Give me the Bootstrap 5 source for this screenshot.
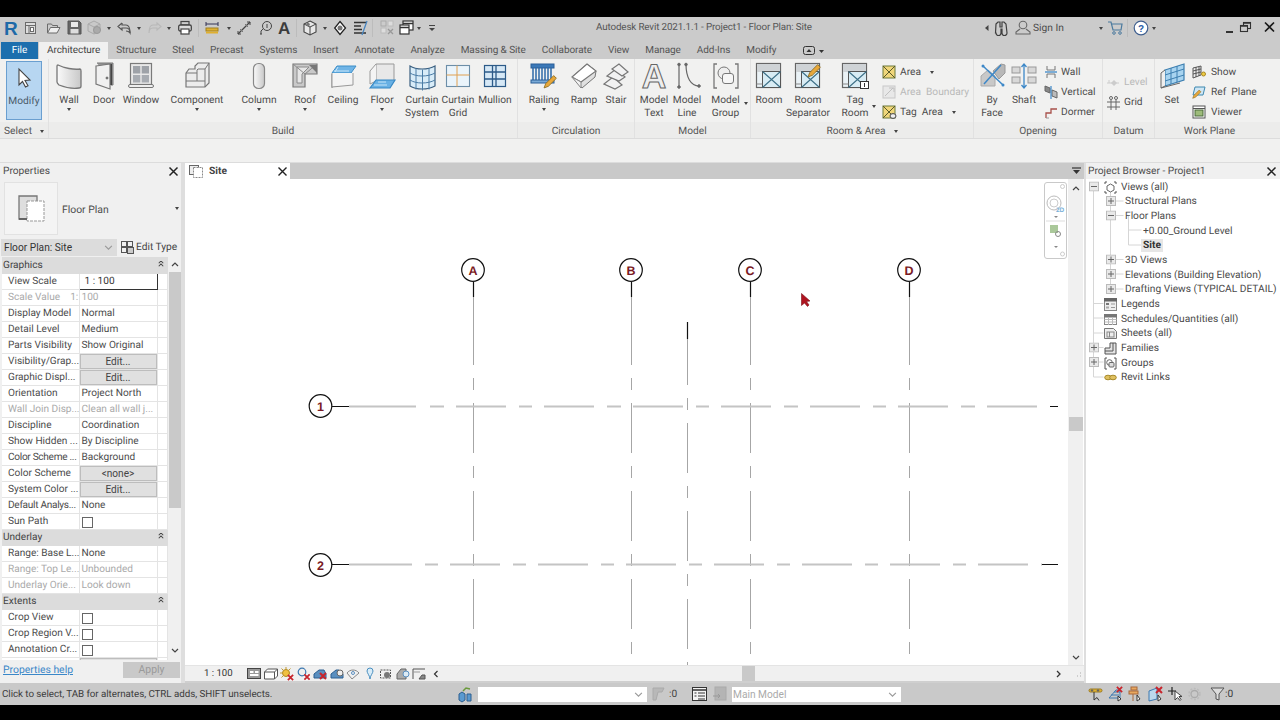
<!DOCTYPE html>
<html lang="en">
<head>
<meta charset="utf-8">
<title>Autodesk Revit 2021.1.1 - Project1 - Floor Plan: Site</title>
<link href="https://cdn.jsdelivr.net/npm/bootstrap@5.3.0/dist/css/bootstrap.min.css" rel="stylesheet">
<style>
html,body{height:720px;overflow:hidden;margin:0}
body{width:1280px;font-family:Roboto,"Noto Sans",sans-serif;font-size:10.2px;line-height:13px;color:#4c4c4c;background:#000;text-rendering:geometricPrecision}
svg{fill:none;stroke:#6b6b6b;stroke-width:1;flex:none;display:block;overflow:visible}
svg text{stroke:none}
svg text.outl{stroke:#666;stroke-width:1}
.letter{height:17px;background:#000;flex:none}
.letter.b{height:15px}
.titlebar{height:25px;background:#cbcbcb;flex:none;padding:0 0 3px 3px}
.qc{width:8px;height:16px;flex:none;position:relative}
.qc::after,.car::after,.pcar{content:"";display:block;width:0;height:0;border:2.5px solid transparent;border-top:3px solid #444;border-bottom:0}
.qc::after{margin:7px auto 0}
.qsep{width:1px;height:18px;background:#bcbcbc;margin:0 2px 0 1px;flex:none}
.wintitle{margin-left:159px;font-size:9.8px;letter-spacing:-.13px;margin-bottom:2px;white-space:nowrap;color:#555}
.signgroup{margin-left:auto;width:295px}
.signin{width:64px;padding-top:1px}
.ribtabs{height:17px;background:#cbcbcb;flex:none;padding-left:1px}
.ribtabs .nav-link{padding:0 8px;height:17px;line-height:18px;font-size:10px;letter-spacing:-.08px;color:#555;border-radius:0}
.ribtabs .nav-link.file{background:#1d6fae;color:#fff;width:37px;text-align:center;padding:0;margin-right:1px}
.ribtabs .nav-link.active{background:#f0f0f0;color:#444}
.ribbon{height:79px;background:#f1f1f0;flex:none}
.rpanel{border-right:1px solid #e1e1e1;display:flex;flex-direction:column;flex:none}
.rtools{height:63px;display:flex;flex:none}
.rtitle{height:16px;line-height:19px;background:#ececeb;text-align:center;flex:none;color:#555;font-size:10.2px}
.rtitle.d-flex{padding-top:2px}
.tool{display:flex;flex-direction:column;align-items:center;padding-top:3px;flex:none;text-align:center;line-height:13px;position:relative}
.tool .lbl{margin-top:4px;white-space:nowrap}
.car{height:4px;margin-top:1px;display:block}
.car::after{margin:0 auto}
.t-caret{width:5px;right:2px;top:43px;margin:0}
.t-caret2{width:5px;right:5px;top:46px;margin:0}
.w28{width:28px}.w30{width:30px}.w34{width:34px}.w36{width:36px}.w38{width:38px}.w40{width:40px}.w42{width:42px}.w44{width:44px}.w49{width:49px}.w52{width:52px}.w56{width:56px}.w68{width:68px}
.modify{margin:2px 6px 0;width:36px;height:59px;background:#b7d6f1;border:1px solid #6a9fd0;padding-top:2px;color:#4a5a68}
.modify .lbl{margin-top:3px}
.pselect{width:49px}
.pselect .rtools{width:48px}
.scol{display:flex;flex-direction:column;padding-top:3px;flex:none}
.srow{height:20.5px;display:flex;align-items:center;gap:4px;white-space:nowrap}
.srow .pcar{margin-left:5px}
.dis{color:#b9b9b9}
.room-col{width:92px;padding-left:1px}
.open-col{width:64px;padding-left:6px}
.open-col .srow{gap:3px}
.datum-col{width:51px;padding-left:3px;padding-top:13px}
.wp-col{padding-left:3px}
.wp-col .srow{gap:5px}
.spacer{height:25px;background:#f1f1f0;border-top:1px solid #dcdcdc;border-bottom:1px solid #dcdcdc;flex:none}
.workarea{height:520px;flex:none;background:#dedede}
.props{width:181px;background:#f0f0f0;margin-right:4px;flex:none;display:flex;flex-direction:column}
.ptitle{height:16px;line-height:18px;padding-left:3px;position:relative;flex:none}
.xbtn{position:absolute;right:2px;top:3px}
.typesel{height:57px;flex:none;padding:3px 0 0 4px;align-items:flex-start}
.thumb{width:54px;height:53px;background:#f4f4f4;border:1px solid #e2e2e2;display:flex;align-items:center;justify-content:center;flex:none}
.typesel .name{margin:21px 0 0 4px;font-size:10.4px;white-space:nowrap}
.typesel .pcar{margin:25px 2px 0 auto}
.instance{height:21px;flex:none;padding:3px 0 1px 1px;align-items:center}
.form-select{--chev:url("data:image/svg+xml,%3csvg xmlns='http://www.w3.org/2000/svg' viewBox='0 0 16 16'%3e%3cpath fill='none' stroke='%23999' stroke-width='2' d='M2 5l6 6 6-6'/%3e%3c/svg%3e");background-image:var(--chev)}
.instance .form-select{width:116px;height:17px;padding:0 14px 0 3px;font-size:10.2px;line-height:17px;background-color:#dcdcdc;background-size:9px 9px;background-position:right 4px center;border:0;border-radius:0;color:#333;font-family:inherit;flex:none}
.edittype{margin-left:4px;display:flex;align-items:center;gap:2px;color:#444;white-space:nowrap;font-size:10.2px}
.gridwrap{height:403px;flex:none;overflow:hidden}
.pgrid{width:165px;margin:0 0 0 2px;table-layout:fixed;border-collapse:collapse;background:#fff;--bs-table-bg:#fff;--bs-table-border-color:#e2e2e2;color:#4c4c4c}
.pgrid .c1{width:77px}.pgrid .c2{width:78px}.pgrid .c3{width:10px}
.pgrid td{height:16px;padding:1px 0 0 6px;font-size:10.1px;line-height:14px;white-space:nowrap;overflow:hidden;border:1px solid #e4e4e4;border-width:1px 1px 1px 0;background:#fff;color:#4c4c4c;box-shadow:none;vertical-align:middle}
.pgrid td.v{padding-left:2px}
.pgrid td.tight{letter-spacing:-.3px}
.pgrid .ro td{color:#aaa}
.pgrid td.sec{background:#dcdcdc;padding:1px 0 0 1px;position:relative;border-color:#dcdcdc;color:#444}
.sec svg{position:absolute;right:3px;top:3px}
.pgrid td.act{border:1px solid #333;padding-left:5px;color:#333}
.pgrid .btn{display:block;width:100%;height:15px;padding:0;border-radius:0;font-size:10.1px;line-height:14px;background:#e0e0e0;border:1px solid #bdbdbd;color:#444;font-family:inherit}
.pgrid .form-check-input{width:11px;height:11px;margin:0;border:1px solid #666;border-radius:0;display:block;float:none}
.pscroll{width:13px;margin-left:1px;flex:none;display:flex;flex-direction:column;align-items:center}
.pscroll .thumbv{width:12px;height:236px;background:#c9c9c9;flex:none}
.pfoot{height:23px;flex:none;padding:2px 1px 0 3px;align-items:flex-start;justify-content:space-between}
.pfoot a{color:#3a87c8;text-decoration:underline;margin-top:1px;font-size:10.4px}
.pfoot .btn{width:57px;height:16px;padding:0;border:0;border-radius:0;background:#c9c9c9;color:#9a9a9a;font-size:10.4px;line-height:16px;opacity:1;font-family:inherit}
.center{width:899px;margin-right:2px;display:flex;flex-direction:column;flex:none}
.doctabs{height:16px;background:#c9c9c9;flex:none;position:relative}
.doctab{width:105px;background:#fff;height:16px;display:flex;align-items:center;padding-left:4px;gap:6px;font-weight:700;color:#444;position:relative;font-size:10.2px;line-height:15px}
.doctab>span{padding-top:1px}
.ddbtn{position:absolute;right:3px;top:4px}
.viewrow{height:486px;flex:none;background:#fff;position:relative}
.vscroll{width:16px;background:#f0f0f0;border-right:1px solid #fff;flex:none;display:flex;flex-direction:column;align-items:center;padding:5px 0 3px 0;justify-content:space-between}
.vscroll i{display:block;width:14px;height:14px;background:#c9c9c9;margin-top:2px}
.navbar-wheel{position:absolute;top:3px;right:17px;width:23px;height:77px;background:#fff;border:1px solid #c9c9c9;border-radius:3px}
.viewbar{height:16px;background:#f0f0f0;border-top:1px solid #e4e4e4;flex:none;align-items:center;position:relative}
.viewbar .sc{margin-left:19px;width:42px;font-size:9.6px;color:#333;white-space:nowrap}
.vslot{width:16.5px;display:flex;justify-content:center;flex:none}
.hthumb{position:absolute;left:557px;top:0;width:13px;height:15px;background:#c9c9c9}
.edge{height:2px;background:#cfcfcf;flex:none}
.browser{flex:1;background:#fff;display:flex;flex-direction:column}
.browser .ptitle{background:#f0f0f0;padding-left:2px}
.browser .xbtn{right:3px}
.tree{position:relative;flex:1;padding:1px 0 0;margin:0;list-style:none;font-size:10.2px;color:#4a4a4a}
.tree>svg{position:absolute;left:0;top:0}
.tree li{height:14.67px;display:flex;align-items:center;gap:4px;position:relative;white-space:nowrap}
.l0{padding-left:18px}
.l1{padding-left:39px}
.l2{padding-left:57px}
.tree .cur{background:#e6e6e6;font-weight:700;padding:0 2px;margin-left:-2px;color:#333}
.statusbar{height:22px;background:#c9c9c9;flex:none;align-items:center;padding-left:2px;position:relative;color:#3c3c3c}
.statusbar .hint{width:456px;white-space:nowrap;font-size:9.8px;letter-spacing:-.05px}
.statusbar .form-select{height:15px;padding:0 12px 0 1px;font-size:10.2px;line-height:15px;background-color:#fff;background-size:9px 9px;background-position:right 4px center;border:0;border-radius:0;color:#aaa;flex:none;font-family:inherit}
.sel1{width:169px;margin-left:5px}
.sel2{width:169px;margin-left:5px}
.s0{margin-left:5px}
.zero{margin-left:4px;width:23px;color:#444}
.m6{margin-left:5px}
.stail{margin-left:187px;gap:5px}
.stail b{font-weight:400;margin-left:-5px}
</style>
</head>
<body class="d-flex flex-column">
<div class="letter"></div>

<header class="titlebar d-flex align-items-center">
  <svg width="18" height="16" viewBox="-1 0 18 16"><text x="0" y="15" font-family="Liberation Sans" font-size="19" font-weight="700" fill="#1e6aa8">R</text></svg>
  <svg width="21" height="16" viewBox="-4 0 21 16"><rect x=".5" y="2.5" width="10" height="11" fill="#ddd"/><path d="M.5 5.5h10M4 5.5v8"/><rect x="5.5" y="7.5" width="3" height="4" fill="#fff"/></svg>
  <svg width="23" height="16" viewBox="-5 0 23 16"><path d="M.5 13V4h4l1 1.500h5v2" /><path d="M.5 13l3-5.500h9.500l-3 5.500z" fill="#eee"/></svg>
  <svg width="20" height="16" viewBox="-2 0 20 16"><path d="M1 1h11l2 2v11H1z" fill="#666" stroke="#555"/><rect x="4" y="2" width="7" height="5" fill="#e8e8e8" stroke="none"/><rect x="3.500" y="9" width="8" height="4.500" fill="#ddd" stroke="none"/></svg>
  <svg width="20" height="16" viewBox="-2 0 20 16"><path d="M7 1l6 3v7l-6 3-6-3V4z" fill="#c9c9c9" stroke="#aaa"/><path d="M1 4l6 3 6-3M7 7v7" stroke="#aaa"/><circle cx="10" cy="10" r="3.500" fill="#aaa" stroke="#999"/></svg>
  <span class="qc"></span>
  <svg width="22" height="16" viewBox="-4 0 22 16"><path d="M5 3L1 6.500 5 10V8h4c3 0 4 2 4 5-1-1.500-2.500-2-4-2" stroke="#555" stroke-width="1.200"/><path d="M5 3v2h4c3 0 4 3 4 8" stroke="#555" stroke-width="1.200"/></svg>
  <span class="qc"></span>
  <svg width="22" height="16" viewBox="-5 0 22 16"><path d="M9 3l4 3.500L9 10V8H5c-3 0-4 2-4 5 0-5 1-8 4-8h4z" stroke="#b8b8b8" stroke-width="1.100"/></svg>
  <span class="qc"></span>
  <svg width="24" height="16" viewBox="-5 0 24 16"><rect x="3" y="1.500" width="8" height="3.500" stroke="#444" stroke-width="1.200"/><rect x=".7" y="5" width="12.600" height="6" rx="1.500" stroke="#444" stroke-width="1.300" fill="#ddd"/><rect x="3" y="9" width="8" height="5" fill="#fff" stroke="#444" stroke-width="1.200"/></svg>
  <span class="qsep"></span>
  <svg width="24" height="16" viewBox="-4 0 24 16"><rect x="1" y="8" width="12" height="3" fill="#e0b030" stroke="#a08020"/><rect x="1" y="11.500" width="12" height="2" fill="#e0b030" stroke="none"/><path d="M1 4h12M1 2v4M13 2v4" stroke="#335"/></svg>
  <span class="qc"></span>
  <svg width="22" height="16" viewBox="-4 0 22 16"><path d="M1 14L13 2" stroke="#444" stroke-width="1.300"/><path d="M1 11v3h3M10 2h3v3" stroke="#444"/><path d="M3 9l3 3M8 4l3 3" stroke="#777"/></svg>
  <svg width="20" height="16" viewBox="-4 0 20 16"><circle cx="8" cy="6" r="4.500" stroke="#444"/><path d="M8 4v4" stroke="#444"/><path d="M4 9l-2 2v3M1 14h2" stroke="#444"/></svg>
  <svg width="20" height="16" viewBox="-3 0 20 16"><text x="0" y="14" font-family="Liberation Sans" font-size="17" font-weight="700" fill="#3c3c3c">A</text></svg>
  <span class="qsep"></span>
  <svg width="22" height="16" viewBox="-4 0 22 16"><path d="M7 1l6 3v8l-6 3-6-3V4z" fill="#e8e8e8" stroke="#444" stroke-width="1.100"/><path d="M1 4l6 3 6-3M7 7v8" stroke="#444"/><circle cx="5" cy="4.500" r="1.800" fill="#777" stroke="none"/></svg>
  <span class="qc"></span>
  <svg width="20" height="16" viewBox="-5 0 20 16"><path d="M6 1.500l5.500 6.500L6 14.500.7 8z" fill="#fff" stroke="#222" stroke-width="1.300"/><circle cx="6" cy="8" r="2.500" fill="#777" stroke="none"/></svg>
  <svg width="22" height="16" viewBox="-4 0 22 16"><path d="M1 2.500h12M1 6h7M1 9.500h8M1 13h12" stroke="#333" stroke-width="1.500"/><path d="M9 15l5-14" stroke="#4a86c0" stroke-width="1.300"/></svg>
  <span class="qsep"></span>
  <svg width="22" height="16" viewBox="-5 0 22 16"><rect x="1" y="1" width="5" height="5" fill="#ccc" stroke="#aaa"/><rect x="8" y="1" width="5" height="5" fill="#ddd" stroke="#bbb"/><rect x="1" y="8" width="5" height="5" fill="#ddd" stroke="#bbb"/><path d="M8 9l5 5M13 9l-5 5" stroke="#999" stroke-width="1.300"/></svg>
  <svg width="18" height="16" viewBox="-2 0 18 16"><rect x="4" y="1" width="10" height="9" fill="#fff" stroke="#333" stroke-width="1.200"/><path d="M4 3.500h10" stroke="#333" stroke-width="1.500"/><rect x="1" y="5" width="9" height="9" fill="#fff" stroke="#333" stroke-width="1.200"/><path d="M1 7.500h9" stroke="#333" stroke-width="1.500"/></svg>
  <span class="qc"></span>
  <svg width="14" height="16" viewBox="-6 0 14 16"><path d="M0 5.500h6" stroke="#444"/><path d="M0 8l3 3 3-3z" fill="#444" stroke="none"/></svg>
  <span class="wintitle">Autodesk Revit 2021.1.1 - Project1 - Floor Plan: Site</span>
  <div class="signgroup d-flex align-items-center">
    <svg width="9" height="16" viewBox="0 0 9 16"><path d="M0 8l3.500-3v6z" fill="#444" stroke="none"/></svg>
    <svg width="21" height="16" viewBox="0 0 21 16"><path d="M2 4l2-2h2v5h2V2h2l2 2 1 9a2 2 0 01-5 0V9H7v4a2 2 0 01-5 0l-.5 0z" stroke="#3f3f3f" stroke-width="1.200"/></svg>
    <svg width="18" height="16" viewBox="0 0 18 16"><circle cx="8" cy="5" r="3.800" stroke="#666" stroke-width="1.100"/><path d="M5 9l-4 3v2h14v-2l-4-3" stroke="#666" stroke-width="1.100"/></svg>
    <span class="signin">Sign In</span>
    <span class="qc"></span>
    <svg width="21" height="16" viewBox="-3 0 21 16"><path d="M0 2h3l2 8h8l1-6H4" stroke="#4b7a9e" stroke-width="1.200"/><circle cx="6" cy="13" r="1.300" stroke="#4b7a9e"/><circle cx="12" cy="13" r="1.300" stroke="#4b7a9e"/></svg>
    <span class="qsep"></span>
    <svg width="20" height="16" viewBox="-3 0 20 16"><circle cx="8" cy="8" r="6.800" stroke="#3f5f8f" stroke-width="1.200" fill="#fff"/><text x="8" y="11.500" text-anchor="middle" font-family="Liberation Sans" font-size="10" font-weight="700" fill="#2d5ea8">?</text></svg>
    <span class="qc"></span>
    <svg class="ms-auto" width="12" height="16" viewBox="0 0 12 16"><path d="M3 12h7" stroke="#222" stroke-width="1.800"/></svg>
    <svg width="21" height="16" viewBox="-5 0 21 16"><rect x="3.500" y="2.500" width="7" height="6" stroke="#333" stroke-width="1.100"/><rect x=".5" y="5.500" width="7" height="6" fill="#cbcbcb" stroke="#333" stroke-width="1.100"/><path d="M.5 6h7M3.500 3h7" stroke="#333" stroke-width="1.500"/></svg>
    <svg class="ms-2 me-1" width="12" height="16" viewBox="0 0 12 16"><path d="M1 2.500l9 9M10 2.500l-9 9" stroke="#1a1a1a" stroke-width="1.700"/></svg>
  </div>
</header>

<ul class="nav ribtabs">
  <li class="nav-item"><a class="nav-link file" href="#">File</a></li>
  <li class="nav-item"><a class="nav-link active" href="#">Architecture</a></li>
  <li class="nav-item"><a class="nav-link" href="#">Structure</a></li>
  <li class="nav-item"><a class="nav-link" href="#">Steel</a></li>
  <li class="nav-item"><a class="nav-link" href="#">Precast</a></li>
  <li class="nav-item"><a class="nav-link" href="#">Systems</a></li>
  <li class="nav-item"><a class="nav-link" href="#">Insert</a></li>
  <li class="nav-item"><a class="nav-link" href="#">Annotate</a></li>
  <li class="nav-item"><a class="nav-link" href="#">Analyze</a></li>
  <li class="nav-item"><a class="nav-link" href="#">Massing &amp; Site</a></li>
  <li class="nav-item"><a class="nav-link" href="#">Collaborate</a></li>
  <li class="nav-item"><a class="nav-link" href="#">View</a></li>
  <li class="nav-item"><a class="nav-link" href="#">Manage</a></li>
  <li class="nav-item"><a class="nav-link" href="#">Add-Ins</a></li>
  <li class="nav-item"><a class="nav-link" href="#">Modify</a></li>
  <li class="nav-item ms-3 d-flex align-items-center"><svg width="24" height="14" viewBox="0 0 24 14"><rect x="3.500" y="2.500" width="11" height="8" rx="2" stroke="#333"/><path d="M6.500 8h5L9 5z" fill="#333" stroke="none"/><path d="M19 6h5l-2.500 3z" fill="#333" stroke="none"/></svg></li>
</ul>

<svg width="0" height="0" class="position-absolute">
  <defs>
    <linearGradient id="g1" x1="0" x2="1"><stop offset="0" stop-color="#fafafa"/><stop offset="1" stop-color="#c8c8c8"/></linearGradient>
    <symbol id="roombox" viewBox="0 0 28 28"><rect x="1.500" y="1.500" width="24" height="24" fill="#eaf2f6" stroke="#666" stroke-width="1.200"/><rect x="2" y="2" width="23" height="8" fill="#cfd3d6" stroke="none"/><rect x="7.500" y="9.500" width="18" height="16" fill="#d8ecf4" stroke="#555"/><path d="M7.500 9.500l18 16M25.500 9.500l-18 16" stroke="#3c6f86" stroke-width="1.100"/><path d="M1.500 22h6" stroke="#888"/></symbol>
    <symbol id="pencil" viewBox="0 0 14 14"><path d="M1 13l1.500-4L10 1.500 12.500 4 5 11.500z" fill="#e8a83a" stroke="#8a6a20" stroke-width=".8"/></symbol>
    <symbol id="redx" viewBox="0 0 8 8"><path d="M1 1l6 6M7 1L1 7" stroke="#c8242c" stroke-width="2"/></symbol>
    <symbol id="yelx" viewBox="0 0 14 14"><rect x="1" y="1" width="12" height="12" fill="#f0d67a" stroke="#6c7a3a"/><path d="M1 1l12 12M13 1L1 13" stroke="#5a5a2a"/></symbol>
    <symbol id="plusbox" viewBox="0 0 10 10"><rect x=".5" y=".5" width="9" height="9" fill="#e9e9e9" stroke="#bbb"/><path d="M2 5h6M5 2v6" stroke="#666"/></symbol>
    <symbol id="minusbox" viewBox="0 0 10 10"><rect x=".5" y=".5" width="9" height="9" fill="#e9e9e9" stroke="#bbb"/><path d="M2 5h6" stroke="#666"/></symbol>
    <symbol id="chevup" viewBox="0 0 8 8"><path d="M1 3l3-3 3 3M1 7l3-3 3 3" stroke="#444" stroke-width="1.400"/></symbol>
  </defs>
</svg>

<section class="ribbon d-flex">
  <div class="rpanel pselect" >
    <div class="rtools">
      <div class="tool modify">
        <svg width="28" height="28" viewBox="0 0 28 28"><path d="M9 5l0 16 3.500-3.500 3 5.500 2.500-1.300-3-5.300 5-.4z" fill="#fff" stroke="#444" stroke-width="1.100"/></svg>
        <span class="lbl">Modify</span>
      </div>
    </div>
    <div class="rtitle text-start ps-1 d-flex align-items-center">Select<span class="pcar ms-2"></span></div>
  </div>

  <div class="rpanel">
    <div class="rtools">
      <div class="tool w40"><svg width="28" height="28" viewBox="0 0 28 28"><path d="M3 3c6 3 16 5 22 4 1 0 1 1 1 2v15c0 1-1 2-2 2-7 1-15-1-20-3-1-1-2-2-2-3V4c0-1 0-1 1-1z" fill="url(#g1)" stroke="#777" stroke-width="1.300"/></svg><span class="lbl">Wall</span><span class="car"></span></div>
      <div class="tool w30"><svg width="28" height="28" viewBox="0 0 28 28"><path d="M7 1h16v22h-2" fill="#9a9a9a" stroke="#777"/><path d="M21 2v21" stroke="#444" stroke-width="2"/><path d="M6 4l14-2v25L6 22z" fill="#f0f0f0" stroke="#777" stroke-width="1.200"/><circle cx="17" cy="16" r="1" fill="#777"/></svg><span class="lbl">Door</span></div>
      <div class="tool w44"><svg width="28" height="28" viewBox="0 0 28 28"><rect x="3.500" y="1.500" width="21" height="21" fill="#e8e8e8" stroke="#7a7a7a" stroke-width="1.200"/><rect x="6" y="4" width="7.300" height="7.500" fill="#9ea2a8" stroke="none"/><rect x="14.700" y="4" width="7.300" height="7.500" fill="#9ea2a8" stroke="none"/><rect x="6" y="13" width="7.300" height="7.500" fill="#a8acb2" stroke="none"/><rect x="14.700" y="13" width="7.300" height="7.500" fill="#a8acb2" stroke="none"/><rect x="1.500" y="22.500" width="25" height="3" rx="1.500" fill="#eee" stroke="#777"/></svg><span class="lbl">Window</span></div>
      <div class="tool w68"><svg width="28" height="28" viewBox="0 0 28 28"><path d="M3 11l3-4h6V4l3-3h11v20l-4 4H3z" fill="#ececec" stroke="#777" stroke-width="1.200"/><path d="M3 11h11V8l1-1h7v18M3 19h11v-8M22 7l4-6M14 19l8 0" stroke="#777"/></svg><span class="lbl">Component</span><span class="car"></span></div>
      <div class="tool w56"><svg width="28" height="28" viewBox="0 0 28 28"><rect x="8.500" y="1.500" width="11" height="25" rx="5" fill="url(#g1)" stroke="#888" stroke-width="1.200"/></svg><span class="lbl">Column</span><span class="car"></span></div>
      <div class="tool w36"><svg width="28" height="28" viewBox="0 0 28 28"><path d="M2 2h24v10H14v13H2z" fill="#c9c9c9" stroke="#7a7a7a" stroke-width="1.200"/><path d="M2 2l12 10M26 2L14 12M6 5h12L11 12v9H6z" fill="#e6e6e6" stroke="#8a8a8a"/><path d="M18 3h8v8z" fill="#777" stroke="none"/></svg><span class="lbl">Roof</span><span class="car"></span></div>
      <div class="tool w40"><svg width="28" height="28" viewBox="0 0 28 28"><path d="M3 26V12" stroke="#999" stroke-width="1.300"/><path d="M3 11l5-7h19l-5 7z" fill="#6fb4e6" stroke="#3d8ec8"/><path d="M5 9h15M9 5l-3 5" stroke="#c9e6f8"/><path d="M3 11v14l21-2V11" fill="#f4f4f4" stroke="#999"/></svg><span class="lbl">Ceiling</span></div>
      <div class="tool w38"><svg width="28" height="28" viewBox="0 0 28 28"><path d="M8 2h18v17H8z" fill="#e8e8e8" stroke="#999"/><path d="M8 2L2 9v13l6-3" fill="#f4f4f4" stroke="#999"/><path d="M2 26l6-8h19l-5 8z" fill="#68b0e4" stroke="#3788c4" stroke-width="1.200"/><path d="M6 23h13M10 20l8 0" stroke="#c8e6f8"/></svg><span class="lbl">Floor</span><span class="car"></span></div>
      <div class="tool w42"><svg width="28" height="28" viewBox="0 0 28 28"><path d="M2 4c6 4 18 4 25 0v20c-7 4-19 4-25 0z" fill="#d8ecf8" stroke="#3a5f80" stroke-width="1.200"/><path d="M8 6.500v21M14.500 7.500v21M21 6.500v21M2 11c6 4 18 4 25 0M2 18c6 4 18 4 25 0" stroke="#4a7ca6"/></svg><span class="lbl">Curtain<br>System</span></div>
      <div class="tool w30"><svg width="28" height="28" viewBox="0 0 28 28"><rect x="2.500" y="3.500" width="23" height="21" fill="#eaf4fb" stroke="#6c8ea8" stroke-width="1.100"/><path d="M13 3.500v21M2.500 13h23" stroke="#e0a050"/></svg><span class="lbl">Curtain<br>Grid</span></div>
      <div class="tool w44"><svg width="28" height="28" viewBox="0 0 28 28"><rect x="3.500" y="3.500" width="21" height="21" fill="#d6e8f6" stroke="#2c5a88" stroke-width="1.200"/><path d="M11.500 3.500v21M15 3.500v21" stroke="#2c5a88" stroke-width="1.300"/><path d="M3.500 10h21M3.500 17h21" stroke="#2c5a88" stroke-width="1.300"/></svg><span class="lbl">Mullion</span></div>
    </div>
    <div class="rtitle">Build</div>
  </div>

  <div class="rpanel">
    <div class="rtools">
      <div class="tool w52"><svg width="28" height="28" viewBox="0 0 28 28"><rect x="1" y="2" width="23" height="4" fill="#3a78b8" stroke="#2a5f98"/><path d="M3 6v13M6 6v13M9 6v13M12 6v13M15 6v13M18 6v13M21 6v13" stroke="#2e6aa8" stroke-width="1.500"/><rect x="1" y="18" width="23" height="3" fill="#7aaad6" stroke="#2a5f98"/><use href="#pencil" x="13" y="12" width="15" height="15"/></svg><span class="lbl">Railing</span><span class="car"></span></div>
      <div class="tool w28"><svg width="28" height="28" viewBox="0 0 28 28"><path d="M2 15L17 2l9 7-1 6-13 11z" fill="#e0e0e0" stroke="#777"/><path d="M2 15L17 2l9 7-15 11z" fill="#fff" stroke="#777" stroke-width="1.100"/><path d="M2 15l9 5v6z" fill="#f2f2f2" stroke="#888"/></svg><span class="lbl">Ramp</span></div>
      <div class="tool w36"><svg width="28" height="28" viewBox="0 0 28 28"><path d="M2 22l9-7 9 8-7 4z" fill="#f2f2f2" stroke="#777" stroke-width="1.200"/><path d="M5 14l9-7 9 8-6 4z" fill="#f2f2f2" stroke="#777" stroke-width="1.200"/><path d="M10 7l7-5 9 8-6 4z" fill="#f2f2f2" stroke="#777" stroke-width="1.200"/></svg><span class="lbl">Stair</span></div>
    </div>
    <div class="rtitle">Circulation</div>
  </div>

  <div class="rpanel">
    <div class="rtools">
      <div class="tool w38"><svg width="28" height="28" viewBox="0 0 28 28"><text class="outl" x="14" y="26" text-anchor="middle" font-family="Liberation Sans" font-size="34" font-weight="700" fill="#eee">A</text></svg><span class="lbl">Model<br>Text</span></div>
      <div class="tool w28"><svg width="28" height="28" viewBox="0 0 28 28"><path d="M6 2v23" stroke="#666" stroke-width="1.200"/><circle cx="6" cy="2.500" r="1.300" fill="#666"/><circle cx="6" cy="25" r="1.300" fill="#666"/><path d="M13 2c0 14 5 22 13 22" stroke="#666" stroke-width="1.200"/><circle cx="13" cy="2.500" r="1.300" fill="#666"/><circle cx="26" cy="24" r="1.300" fill="#666"/></svg><span class="lbl">Model<br>Line</span></div>
      <div class="tool w49"><svg width="28" height="28" viewBox="0 0 28 28"><path d="M5 2H2v24h3M23 2h3v24h-3" stroke="#777" stroke-width="1.300"/><circle cx="12" cy="11" r="6" fill="#eee" stroke="#777"/><rect x="10.500" y="11.500" width="11" height="10" rx="2.500" fill="#f6f6f6" stroke="#777"/></svg><span class="lbl">Model<br>Group</span><span class="car position-absolute t-caret"></span></div>
    </div>
    <div class="rtitle">Model</div>
  </div>

  <div class="rpanel">
    <div class="rtools">
      <div class="tool w36"><svg width="28" height="28"><use href="#roombox" width="28" height="28"/></svg><span class="lbl">Room</span></div>
      <div class="tool w42"><svg width="28" height="28"><use href="#roombox" width="28" height="28"/><use href="#pencil" x="13" y="1" width="15" height="15"/></svg><span class="lbl">Room<br>Separator</span></div>
      <div class="tool w52"><svg width="28" height="28"><use href="#roombox" width="28" height="28"/><rect x="19.500" y="19.500" width="8" height="7" fill="#fff" stroke="#333"/><path d="M23.500 21v4" stroke="#333"/></svg><span class="lbl">Tag<br>Room</span><span class="car position-absolute t-caret2"></span></div>
      <div class="scol room-col">
        <div class="srow"><svg width="14" height="14"><use href="#yelx" width="14" height="14"/></svg><span>Area</span><span class="pcar"></span></div>
        <div class="srow dis"><svg width="14" height="14" viewBox="0 0 14 14"><rect x="1" y="1" width="12" height="12" fill="#e8e8e8" stroke="#c8c8c8"/><path d="M3 11l8-8M7 3h5v4" stroke="#c0c0c0"/></svg><span>Area&nbsp; Boundary</span></div>
        <div class="srow"><svg width="14" height="14" viewBox="0 0 14 14"><use href="#yelx" width="14" height="14"/><ellipse cx="11" cy="11" rx="3" ry="2.400" fill="#eee" stroke="#444"/></svg><span>Tag&nbsp; Area</span><span class="pcar"></span></div>
      </div>
    </div>
    <div class="rtitle d-flex justify-content-center align-items-center gap-1" >Room &amp; Area <span class="pcar ms-1"></span></div>
  </div>

  <div class="rpanel">
    <div class="rtools">
      <div class="tool w36"><svg width="28" height="28" viewBox="0 0 28 28"><path d="M3 24V14l7-6 7 6v10z" fill="#c8c8c8" stroke="#aaa"/><path d="M15 9l8-7 4 1v8l-6 6z" fill="#b8b8b8" stroke="#999"/><path d="M5 4l20 19" stroke="#3d88c8" stroke-width="1.500"/><path d="M23 3L6 22" stroke="#3d88c8" stroke-width="1.500"/><circle cx="5" cy="4" r="1.500" fill="#3d88c8" stroke="none"/><circle cx="25" cy="23" r="1.500" fill="#3d88c8" stroke="none"/></svg><span class="lbl">By<br>Face</span></div>
      <div class="tool w28"><svg width="28" height="28" viewBox="0 0 28 28"><rect x="2" y="5" width="8" height="6" fill="#d8d8d8" stroke="#999"/><rect x="18" y="5" width="8" height="6" fill="#d8d8d8" stroke="#999"/><rect x="2" y="15" width="8" height="6" fill="#d8d8d8" stroke="#999"/><rect x="18" y="15" width="8" height="6" fill="#d8d8d8" stroke="#999"/><path d="M14 2v24M11.500 5L14 2l2.500 3M11.500 23l2.500 3 2.500-3" stroke="#3d88c8" stroke-width="1.300"/></svg><span class="lbl">Shaft</span></div>
      <div class="scol open-col">
        <div class="srow"><svg width="14" height="14" viewBox="0 0 14 14"><path d="M3 1v4h8V1M3 13V9h8v4" stroke="#777"/><path d="M1 7h12" stroke="#3d88c8" stroke-width="1.300"/></svg><span>Wall</span></div>
        <div class="srow"><svg width="14" height="14" viewBox="0 0 14 14"><path d="M1 1l5 2v5L1 6z" fill="#888" stroke="#666"/><path d="M8 5l5 2v6l-5-2z" fill="#bbb" stroke="#666"/><path d="M7 1v13" stroke="#3d88c8" stroke-width="1.200"/></svg><span>Vertical</span></div>
        <div class="srow"><svg width="14" height="14" viewBox="0 0 14 14"><path d="M2 13V8h5l0-4h6" stroke="#a8504a" stroke-width="1.300"/><path d="M2 13h3" stroke="#999"/></svg><span>Dormer</span></div>
      </div>
    </div>
    <div class="rtitle">Opening</div>
  </div>

  <div class="rpanel">
    <div class="rtools">
      <div class="scol datum-col">
        <div class="srow dis"><svg width="14" height="14" viewBox="0 0 14 14"><path d="M1 8h12M3 5v3" stroke="#ccc"/><path d="M8 5l3 3-3 3-3-3z" fill="#ccc" stroke="none"/></svg><span>Level</span></div>
        <div class="srow"><svg width="14" height="14" viewBox="0 0 14 14"><circle cx="5" cy="2" r="1.500" stroke="#666"/><circle cx="10" cy="2" r="1.500" stroke="#666"/><path d="M5 4v10M10 4v10M1 6h13M1 11h13" stroke="#666"/></svg><span>Grid</span></div>
      </div>
    </div>
    <div class="rtitle">Datum</div>
  </div>

  <div class="rpanel flex-fill border-0">
    <div class="rtools">
      <div class="tool w34"><svg width="28" height="28" viewBox="0 0 28 28"><path d="M7 8l19-6v16L7 24z" fill="#a8d4f0" stroke="#3d7fb0" stroke-width="1.200"/><path d="M13 6v16M19 4v16M7 13l19-6M7 19l19-6" stroke="#3d7fb0"/><path d="M7 8L3 11v15l4-2" stroke="#666" fill="#eee"/><path d="M3 26l19-5" stroke="#666"/></svg><span class="lbl">Set</span></div>
      <div class="scol wp-col">
        <div class="srow"><svg width="14" height="14" viewBox="0 0 14 14"><path d="M1 3l8-2v9l-8 3z" fill="#eee" stroke="#555"/><path d="M4 2v10M7 2v9M1 6l8-2M1 9l8-2" stroke="#555"/><circle cx="11.500" cy="9" r="2" fill="#eecc44" stroke="#aa8822"/></svg><span>Show</span></div>
        <div class="srow"><svg width="14" height="14" viewBox="0 0 14 14"><path d="M3 2h10l-2 8H1z" fill="#cfe6f4" stroke="#3d88b0"/><use href="#pencil" x="0" y="4" width="10" height="10"/></svg><span>Ref&nbsp; Plane</span></div>
        <div class="srow"><svg width="14" height="14" viewBox="0 0 14 14"><rect x="1" y="1" width="12" height="12" fill="#fff" stroke="#555"/><path d="M1 3.500h12" stroke="#555"/><rect x="3" y="5" width="8" height="6" fill="#9dbb7a" stroke="#4a6a3a"/></svg><span>Viewer</span></div>
      </div>
    </div>
    <div class="rtitle pe-3">Work Plane</div>
  </div>
</section>

<div class="spacer"></div>

<main class="workarea d-flex">
  <aside class="props">
    <div class="ptitle">Properties
      <svg class="xbtn" width="11" height="11" viewBox="0 0 11 11"><path d="M1.500 1.500l8 8M9.500 1.500l-8 8" stroke="#222" stroke-width="1.500"/></svg>
    </div>
    <div class="typesel d-flex">
      <div class="thumb"><svg width="28" height="30" viewBox="0 0 28 30"><path d="M2 2h18v23H2z" fill="#dedede" stroke="#777" stroke-width="1.300"/><rect x="10" y="7" width="17" height="20" fill="#fff" stroke="#999" stroke-dasharray="3 1"/><path d="M2 25h8" stroke="#555" stroke-width="1.500"/></svg></div>
      <span class="name">Floor Plan</span>
      <span class="pcar"></span>
    </div>
    <div class="instance d-flex">
      <select class="form-select" aria-label="Instance"><option>Floor Plan: Site</option></select>
      <div class="edittype"><svg width="13" height="13" viewBox="0 0 13 13"><rect x=".5" y=".5" width="5" height="5" stroke="#555"/><rect x="6.500" y=".5" width="5" height="5" stroke="#555"/><rect x=".5" y="6.500" width="5" height="5" stroke="#555"/><rect x="6.500" y="6.500" width="6" height="6" fill="#ccc" stroke="#555"/></svg>Edit Type</div>
    </div>
    <div class="d-flex flex-fill">
      <div>
        <div class="gridwrap">
          <table class="table pgrid">
            <colgroup><col class="c1"><col class="c2"><col class="c3"></colgroup>
            <tbody>
            <tr><td class="sec" colspan="3">Graphics<svg width="6" height="6"><use href="#chevup" width="6" height="6"/></svg></td></tr>
            <tr><td>View Scale</td><td class="v act">1 : 100</td><td></td></tr>
            <tr class="ro"><td>Scale Value &nbsp; &nbsp;1:</td><td class="v">100</td><td></td></tr>
            <tr><td>Display Model</td><td class="v">Normal</td><td></td></tr>
            <tr><td>Detail Level</td><td class="v">Medium</td><td></td></tr>
            <tr><td>Parts Visibility</td><td class="v">Show Original</td><td></td></tr>
            <tr><td>Visibility/Grap...</td><td class="v p-0"><button class="btn">Edit...</button></td><td></td></tr>
            <tr><td>Graphic Displ...</td><td class="v p-0"><button class="btn">Edit...</button></td><td></td></tr>
            <tr><td>Orientation</td><td class="v">Project North</td><td></td></tr>
            <tr class="ro"><td>Wall Join Disp...</td><td class="v">Clean all wall j...</td><td></td></tr>
            <tr><td>Discipline</td><td class="v">Coordination</td><td></td></tr>
            <tr><td>Show Hidden ...</td><td class="v">By Discipline</td><td></td></tr>
            <tr><td class="tight">Color Scheme ...</td><td class="v">Background</td><td></td></tr>
            <tr><td>Color Scheme</td><td class="v p-0"><button class="btn">&lt;none&gt;</button></td><td></td></tr>
            <tr><td>System Color ...</td><td class="v p-0"><button class="btn">Edit...</button></td><td></td></tr>
            <tr><td class="tight">Default Analys...</td><td class="v">None</td><td></td></tr>
            <tr><td>Sun Path</td><td class="v"><input class="form-check-input" type="checkbox" aria-label="Sun Path"></td><td></td></tr>
            <tr><td class="sec" colspan="3">Underlay<svg width="6" height="6"><use href="#chevup" width="6" height="6"/></svg></td></tr>
            <tr><td>Range: Base L...</td><td class="v">None</td><td></td></tr>
            <tr class="ro"><td>Range: Top Le...</td><td class="v">Unbounded</td><td></td></tr>
            <tr class="ro"><td>Underlay Orie...</td><td class="v">Look down</td><td></td></tr>
            <tr><td class="sec" colspan="3">Extents<svg width="6" height="6"><use href="#chevup" width="6" height="6"/></svg></td></tr>
            <tr><td>Crop View</td><td class="v"><input class="form-check-input" type="checkbox" aria-label="Crop View"></td><td></td></tr>
            <tr><td>Crop Region V...</td><td class="v"><input class="form-check-input" type="checkbox" aria-label="Crop Region"></td><td></td></tr>
            <tr><td>Annotation Cr...</td><td class="v"><input class="form-check-input" type="checkbox" aria-label="Annotation Crop"></td><td></td></tr>
            <tr><td></td><td class="v p-0"><button class="btn" aria-label="Edit"></button></td><td></td></tr>
            </tbody>
          </table>
        </div>
      </div>
      <div class="pscroll">
        <svg width="12" height="15" viewBox="0 0 12 15"><path d="M3 9l3-3 3 3" stroke="#444" stroke-width="1.200"/></svg>
        <div class="thumbv"></div>
        <svg class="mt-auto mb-1" width="12" height="10" viewBox="0 0 12 10"><path d="M3 3l3 3 3-3" stroke="#444" stroke-width="1.200"/></svg>
      </div>
    </div>
    <div class="pfoot d-flex">
      <a href="#">Properties help</a>
      <button class="btn" disabled>Apply</button>
    </div>
  </aside>

  <div class="center">
    <div class="doctabs">
      <div class="doctab"><svg width="14" height="14" viewBox="0 0 14 14"><rect x=".5" y="1.500" width="9" height="9" fill="#eee" stroke="#666"/><rect x="4.500" y="3.500" width="9" height="10" fill="#fff" stroke="#888" stroke-dasharray="2 1"/></svg><span>Site</span>
        <svg class="xbtn" width="11" height="11" viewBox="0 0 11 11"><path d="M1.500 1.500l8 8M9.500 1.500l-8 8" stroke="#222" stroke-width="1.400"/></svg>
      </div>
      <svg class="ddbtn" width="9" height="8" viewBox="0 0 9 8"><path d="M0 1h9" stroke="#333" stroke-width="1.200"/><path d="M1 3h7L4.500 7z" fill="#333" stroke="none"/></svg>
    </div>
    <div class="viewrow d-flex">
      <svg width="883" height="486" viewBox="185 179 883 486">
        <g stroke="#a6a6a6" stroke-width="1">
          <path d="M473.500 297V365M631.500 297V365M750.500 297V365M909.500 297V365"/>
          <path d="M473.500 378V654M631.500 378V654M750.500 378V654M909.500 378V654" stroke-dasharray="12 13 50 13"/>
          <path d="M687.500 339V385"/>
          <path d="M687.500 398V666" stroke-dasharray="12 13 50 13"/>
        </g>
        <g stroke="#c4c4c4" stroke-width="2">
          <path d="M349 406.500H416M349 564.500H412"/>
          <path d="M430 406.500H1050" stroke-dasharray="14 12 50 13 13 12 50 13"/>
          <path d="M425 564.500H1042" stroke-dasharray="13 12 50 13"/>
        </g>
        <g stroke="#111" stroke-width="1.200">
          <path d="M473.500 282V297M631.500 282V297M750.500 282V297M909.500 282V297M687.500 322V339"/>
          <path d="M332 406.500H349M332 564.500H349M1050 406.500H1058M1042 564.500H1058"/>
          <circle cx="473" cy="270" r="11.300" fill="#fff"/><circle cx="631" cy="270" r="11.300" fill="#fff"/><circle cx="750" cy="270" r="11.300" fill="#fff"/><circle cx="909" cy="270" r="11.300" fill="#fff"/>
          <circle cx="320.500" cy="406" r="11.300" fill="#fff"/><circle cx="320.500" cy="565" r="11.300" fill="#fff"/>
        </g>
        <g font-family="Liberation Sans" font-size="12.500" font-weight="700" fill="#7a1a24" text-anchor="middle">
          <text x="473" y="274.500">A</text><text x="631" y="274.500">B</text><text x="750" y="274.500">C</text><text x="909" y="274.500">D</text>
          <text x="320.500" y="410.500">1</text><text x="320.500" y="569.500">2</text>
        </g>
        <path d="M801.500 293.500l0 12 3-2.500 3 3.500 1.500-1.500-2.500-3.500 3.500-.5z" fill="#b01420" stroke="#7a1018" stroke-width=".6"/>
      </svg>
      <div class="navbar-wheel">
        <svg width="21" height="75" viewBox="0 0 21 75"><circle cx="17.500" cy="3.500" r="2" stroke="#ccc"/><circle cx="9" cy="20" r="7" stroke="#bbb"/><circle cx="9" cy="20" r="4" stroke="#ccc"/><text x="11" y="29" font-family="Liberation Sans" font-size="6.500" font-weight="700" fill="#7ab0d8">2D</text><path d="M9 33l2 2 2-2z" fill="#888" stroke="none"/><path d="M1 38h19" stroke="#ddd"/><rect x="5" y="42" width="8" height="8" fill="#aac89a" stroke="none"/><circle cx="13" cy="51" r="2.500" stroke="#888"/><path d="M9 63l2 2 2-2z" fill="#888" stroke="none"/><circle cx="17.500" cy="71" r="2" stroke="#ccc"/></svg>
      </div>
      <div class="vscroll">
        <svg width="12" height="8" viewBox="0 0 12 8"><path d="M3 6l3-3 3 3" stroke="#444" stroke-width="1.200"/></svg>
        <i></i>
        <svg width="12" height="8" viewBox="0 0 12 8"><path d="M3 2l3 3 3-3" stroke="#444" stroke-width="1.200"/></svg>
      </div>
    </div>
    <div class="viewbar d-flex">
      <span class="sc">1 : 100</span>
      <div class="vslot"><svg width="14" height="11" viewBox="0 0 14 11"><rect x=".5" y=".5" width="13" height="10" fill="#999" stroke="#444"/><rect x="3" y="3" width="3.500" height="2" fill="#fff" stroke="none"/><rect x="8" y="3" width="3.500" height="2" fill="#fff" stroke="none"/><rect x="3" y="6" width="8.500" height="2" fill="#fff" stroke="none"/></svg></div>
      <div class="vslot"><svg width="14" height="12" viewBox="0 0 14 12"><path d="M.5 4l3-3h10v7l-3 3H.5z" fill="#fff" stroke="#555"/><path d="M.5 4h10v7M10.500 4l3-3" stroke="#555"/></svg></div>
      <div class="vslot"><svg width="14" height="14" viewBox="0 0 14 14"><circle cx="6" cy="6" r="3.500" fill="#f0c040" stroke="#b08820"/><path d="M6 0v2M0 6h2M1.500 1.500L3 3M10.500 1.500L9 3M1.500 10.500L3 9" stroke="#c09830"/><use href="#redx" x="7" y="7" width="7" height="7"/></svg></div>
      <div class="vslot"><svg width="14" height="14" viewBox="0 0 14 14"><circle cx="5" cy="5" r="3.800" stroke="#3d78b0" stroke-width="1.200"/><use href="#redx" x="6.500" y="6.500" width="7" height="7"/></svg></div>
      <div class="vslot"><svg width="14" height="14" viewBox="0 0 14 14"><path d="M1 7l5-4h5l2 4v4H1z" fill="#5a8fc0" stroke="#2c5f90"/><use href="#redx" x="6" y="5" width="8" height="8"/></svg></div>
      <div class="vslot"><svg width="14" height="14" viewBox="0 0 14 14"><path d="M1 7l5-4h3v4l4 0v4H1z" fill="#5a8fc0" stroke="#2c5f90"/><circle cx="10" cy="6" r="3" fill="#eee" stroke="#666"/></svg></div>
      <div class="vslot"><svg width="14" height="12" viewBox="0 0 14 12"><path d="M1 5c3-4 9-4 12 0M1 5l5 6 7-6" stroke="#888"/><circle cx="7" cy="5" r="1.500" stroke="#5a8fc0"/></svg></div>
      <div class="vslot"><svg width="8" height="13" viewBox="0 0 8 13"><path d="M4 1a3 3 0 013 3c0 2-3 5-3 8 0-3-3-6-3-8a3 3 0 013-3z" fill="#d8ecf8" stroke="#4a8fc0"/></svg></div>
      <div class="vslot"><svg width="14" height="12" viewBox="0 0 14 12"><rect x="1.500" y="2" width="10" height="8" stroke="#555" stroke-dasharray="2 1"/><circle cx="8" cy="7" r="3" fill="#777" stroke="none"/></svg></div>
      <div class="vslot"><svg width="14" height="12" viewBox="0 0 14 12"><path d="M1 6l4-5h5v10H1z" fill="#aaa" stroke="#666"/><circle cx="10" cy="6" r="3" fill="#dceaf4" stroke="#5a8fc0"/></svg></div>
      <div class="vslot"><svg width="14" height="12" viewBox="0 0 14 12"><path d="M1 1h12M1 1v10" stroke="#555"/><path d="M1 4h7" stroke="#999"/><path d="M7 11l3-4h3v4z" fill="#888" stroke="#555"/></svg></div>
      <svg class="ms-1" width="8" height="10" viewBox="0 0 8 10"><path d="M5.500 2L2.500 5l3 3" stroke="#333" stroke-width="1.200"/></svg>
      <div class="hthumb"></div>
      <svg class="ms-auto" width="31" height="10" viewBox="0 0 31 10"><path d="M4 2l3 3-3 3" stroke="#333" stroke-width="1.300"/><path d="M27 7h1M24 7h1M27 4h1" stroke="#aaa"/></svg>
    </div>
    <div class="edge"></div>
  </div>

  <aside class="browser">
    <div class="ptitle">Project Browser - Project1
      <svg class="xbtn" width="11" height="11" viewBox="0 0 11 11"><path d="M1.500 1.500l8 8M9.500 1.500l-8 8" stroke="#222" stroke-width="1.500"/></svg>
    </div>
    <ul class="tree">
      <svg width="194" height="220" viewBox="1086 179 194 220" aria-hidden="true">
        <g stroke="#d6d6d6">
          <path d="M1093.500 190V377M1110.500 190V289M1128.500 216V245"/>
          <path d="M1093.500 303.500h10M1093.500 318h10M1093.500 333h10M1093.500 347.500h10M1093.500 362h10M1093.500 377h10"/>
          <path d="M1110.500 201h13M1110.500 215.500h13M1110.500 259.500h13M1110.500 274h13M1110.500 289h13M1128.500 230h13M1128.500 245h13"/>
        </g>
        <use href="#minusbox" x="1089" y="181.500" width="10" height="10"/>
        <use href="#plusbox" x="1106" y="196" width="10" height="10"/>
        <use href="#minusbox" x="1106" y="210.500" width="10" height="10"/>
        <use href="#plusbox" x="1106" y="254.500" width="10" height="10"/>
        <use href="#plusbox" x="1106" y="269" width="10" height="10"/>
        <use href="#plusbox" x="1106" y="284" width="10" height="10"/>
        <use href="#plusbox" x="1089" y="342.500" width="10" height="10"/>
        <use href="#plusbox" x="1089" y="357" width="10" height="10"/>
      </svg>
      <li class="l0"><svg width="13" height="13" viewBox="0 0 13 13"><path d="M1 3V1h2M10 1h2v2M1 10v2h2M10 12h2v-2" stroke="#555"/><path d="M6.500 3l3.500 2v4l-3.500 2L3 9V5z" fill="#fff" stroke="#666"/></svg>Views (all)</li>
      <li class="l1">Structural Plans</li>
      <li class="l1">Floor Plans</li>
      <li class="l2">+0.00_Ground Level</li>
      <li class="l2"><span class="cur">Site</span></li>
      <li class="l1">3D Views</li>
      <li class="l1">Elevations (Building Elevation)</li>
      <li class="l1">Drafting Views (TYPICAL DETAIL)</li>
      <li class="l0"><svg width="13" height="13" viewBox="0 0 13 13"><rect x=".5" y=".5" width="12" height="12" fill="#eee" stroke="#888"/><rect x=".5" y=".5" width="12" height="2.500" fill="#666" stroke="#666"/><rect x="2" y="5" width="3" height="2" fill="#777" stroke="none"/><rect x="2" y="8.500" width="3" height="2" fill="#aaa" stroke="none"/><path d="M7 6h4M7 9.500h4" stroke="#999"/></svg>Legends</li>
      <li class="l0"><svg width="13" height="13" viewBox="0 0 13 13"><rect x=".5" y="1.500" width="12" height="10" fill="#fff" stroke="#888"/><rect x=".5" y="1.500" width="12" height="2.500" fill="#777" stroke="#777"/><path d="M.5 6.500h12M.5 9h12M4.500 4v8M8.500 4v8" stroke="#bbb"/></svg>Schedules/Quantities (all)</li>
      <li class="l0"><svg width="13" height="13" viewBox="0 0 13 13"><path d="M.5 1.500h9l3 3v7H.5z" fill="#eee" stroke="#777"/><rect x="3" y="5" width="7" height="5" stroke="#888"/><path d="M5.500 5v5" stroke="#888"/></svg>Sheets (all)</li>
      <li class="l0"><svg width="13" height="13" viewBox="0 0 13 13"><path d="M1 6h5V1h6v11H1z" fill="#e4e4e4" stroke="#555"/><path d="M1 9h8V1" stroke="#555"/></svg>Families</li>
      <li class="l0"><svg width="13" height="13" viewBox="0 0 13 13"><path d="M3 1H1v11h2M10 1h2v11h-2" stroke="#555"/><circle cx="5.500" cy="5.500" r="2.800" stroke="#666"/><rect x="5" y="5.500" width="5" height="4.500" rx="1" fill="#ddd" stroke="#666"/></svg>Groups</li>
      <li class="l0"><svg width="13" height="13" viewBox="0 0 13 13"><ellipse cx="4" cy="6.500" rx="3.300" ry="2.300" fill="#dfc060" stroke="#a88a2a"/><ellipse cx="9" cy="6.500" rx="3.300" ry="2.300" fill="#dfc060" stroke="#a88a2a"/></svg>Revit Links</li>
    </ul>
  </aside>
</main>

<footer class="statusbar d-flex">
  <span class="hint">Click to select, TAB for alternates, CTRL adds, SHIFT unselects.</span>
  <svg width="15" height="16" viewBox="0 0 15 16"><path d="M1 8l3-2 3 2v6l-3 2-3-2z" fill="#5a9ad0" stroke="#2c5f90"/><path d="M9 8h4v7H9z" fill="#5a9ad0" stroke="#2c5f90"/><path d="M5 5l3-3 4 1" stroke="#6a9a3a" stroke-width="1.500"/></svg>
  <select class="form-select sel1" disabled aria-label="Workset"><option></option></select>
  <svg class="s0" width="13" height="16" viewBox="0 0 13 16"><path d="M1 2h11l-2 4H6L4 14H1z" fill="#b8b8b8" stroke="#aaa"/></svg>
  <span class="zero">:0</span>
  <svg width="15" height="16" viewBox="0 0 15 16"><rect x=".5" y="1.500" width="14" height="13" fill="#f4f4f4" stroke="#333"/><path d="M.5 4h14" stroke="#333" stroke-width="1.500"/><path d="M2.500 7h2M2.500 10h2M6 7h7M6 10h7M6 13h7" stroke="#333"/></svg>
  <svg class="m6" width="15" height="16" viewBox="0 0 15 16"><rect x="3" y="1" width="11" height="13" fill="#b4b4b4" stroke="#aaa"/><path d="M1 10h7l-2-2M8 10l-2 2" stroke="#999"/></svg>
  <select class="form-select sel2" disabled aria-label="Design option"><option>Main Model</option></select>
  <div class="stail d-flex align-items-center">
    <svg width="15" height="16" viewBox="0 0 15 16"><rect x="1" y="3" width="13" height="3" rx="1.500" fill="#e0b030" stroke="#9a7a20"/><path d="M6 6v8l3-2.500 2 3" stroke="#333"/><circle cx="4" cy="4.500" r=".8" fill="#333"/><circle cx="10" cy="4.500" r=".8" fill="#333"/></svg>
    <svg width="15" height="16" viewBox="0 0 15 16"><path d="M1 12L8 4h4v8z" stroke="#3d78b0"/><path d="M3 9h8M6 6h6" stroke="#3d78b0"/><use href="#redx" x="8" y="0" width="7" height="7"/><path d="M10 10l0 5 3-2z" fill="#fff" stroke="#333"/></svg>
    <svg width="15" height="16" viewBox="0 0 15 16"><rect x="3" y="1" width="6" height="3" fill="#e8a860" stroke="#a8683a"/><rect x="1" y="5" width="9" height="3" fill="#e8a860" stroke="#a8683a"/><path d="M5 8v7" stroke="#a8683a"/><path d="M9 9v6l3-2z" fill="#fff" stroke="#333"/></svg>
    <svg width="15" height="16" viewBox="0 0 15 16"><path d="M1 5l8-3v11l-8 2z" fill="#bcd8ec" stroke="#3d78b0"/><use href="#redx" x="7" y="0" width="8" height="8"/><path d="M10 9v6l3-2z" fill="#fff" stroke="#333"/></svg>
    <svg width="15" height="16" viewBox="0 0 15 16"><path d="M4 1v8M0 5h8" stroke="#222" stroke-width="1.200"/><path d="M7 5v9l2.500-2.500 2.500 3 1-1-2-3h3z" fill="#fff" stroke="#444"/></svg>
    <svg width="13" height="16" viewBox="0 0 13 16"><circle cx="6.500" cy="8" r="3.500" stroke="#aaa" stroke-width="1.300"/><circle cx="6.500" cy="8" r="5.500" stroke="#bbb" stroke-dasharray="2 1.500" stroke-width="1.500"/></svg>
    <svg class="ms-1" width="15" height="16" viewBox="0 0 15 16"><path d="M1 2h13L9 8v6l-3-1V8z" fill="#dcdcdc" stroke="#555"/></svg>
    <b>:0</b>
  </div>
</footer>
<div class="letter b"></div>
<script src="https://cdn.jsdelivr.net/npm/bootstrap@5.3.0/dist/js/bootstrap.bundle.min.js"></script>
</body>
</html>
